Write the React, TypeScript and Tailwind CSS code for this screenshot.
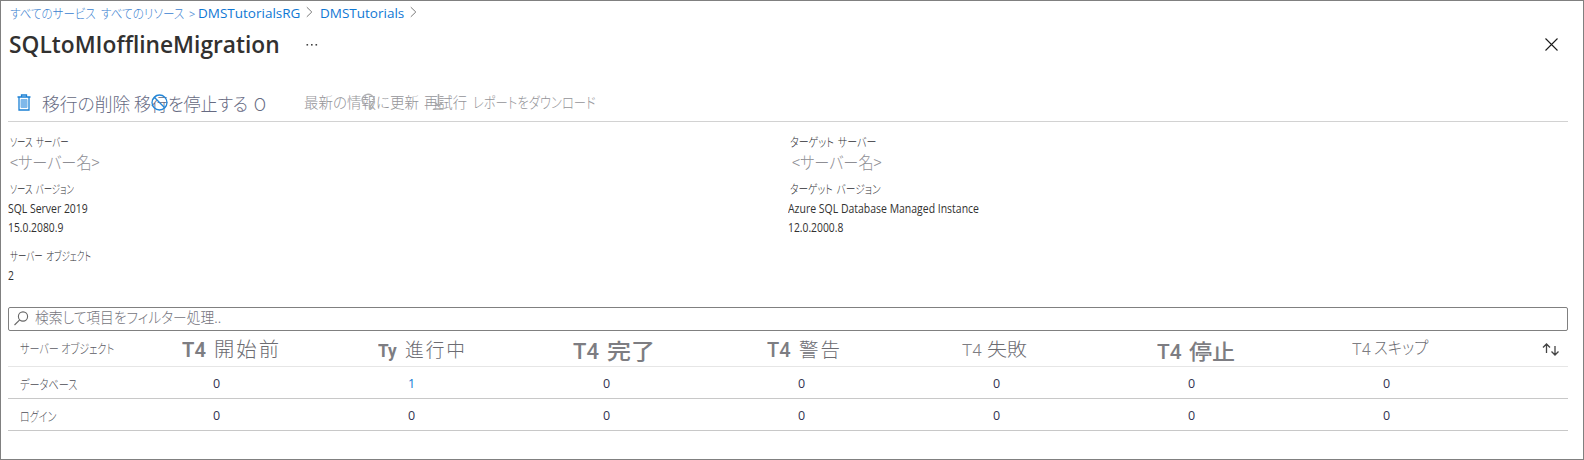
import { useLayoutEffect, useRef, useState } from "react";
import type { ReactNode } from "react";

const JP = "font-['Noto_Sans_CJK_JP',sans-serif] font-light [font-feature-settings:'palt']";
const EN = "font-['Open_Sans','Noto_Sans',sans-serif]";

/* A single line of text condensed or widened to an exact width. */
function Fit({ w, className = "", children }: { w: number; className?: string; children: ReactNode }) {
  const ref = useRef<HTMLSpanElement>(null);
  const [scale, setScale] = useState(1);
  useLayoutEffect(() => {
    const natural = ref.current?.offsetWidth;
    if (natural) setScale(w / natural);
  }, [w, children]);
  return (
    <span className="block shrink-0 whitespace-nowrap" style={{ width: w }}>
      <span ref={ref} className={`inline-block origin-left ${className}`} style={{ transform: `scaleX(${scale})` }}>
        {children}
      </span>
    </span>
  );
}

function Chevron() {
  return (
    <svg width="7" height="12" viewBox="0 0 7 12" fill="none" stroke="#7a7a7a" className="mt-px shrink-0">
      <path d="M.8 1.2 5.8 6 .8 10.8" />
    </svg>
  );
}

type Info = { label: string; labelW: number; lines: [string, number][] };

function Server({ label, labelW, indent }: { label: string; labelW: number; indent: string }) {
  return (
    <div className="h-12">
      <div className="flex h-[19px] items-center pl-0.5">
        <Fit w={labelW} className={`${JP} text-[12px] leading-[18px] text-[#2e2e34] [word-spacing:2px]`}>{label}</Fit>
      </div>
      <div className={`flex h-6 items-center ${indent}`}>
        <Fit w={90} className={`${JP} text-[17px] leading-6 text-[#8e8e94]`}>&lt;サーバー名&gt;</Fit>
      </div>
    </div>
  );
}

function Details({ label, labelW, lines }: Info) {
  return (
    <div>
      <div className="flex h-[18px] items-center pl-0.5">
        <Fit w={labelW} className={`${JP} text-[12px] leading-[18px] text-[#2e2e34] [word-spacing:2px]`}>{label}</Fit>
      </div>
      {lines.map(([text, w]) => (
        <div key={text} className="flex h-[19px] items-center">
          <Fit w={w} className={`${EN} text-[12px] leading-[19px] text-[#323130]`}>{text}</Fit>
        </div>
      ))}
    </div>
  );
}

const thin = `${JP} text-[#6c6c72]`;
const columns = [
  { tag: "T4", tagW: 24, tagC: "font-semibold text-[21px]", gap: "gap-2", name: "開始前", nameW: 67, nameC: `${thin} text-[20px] tracking-[2px]`, pad: "pt-1" },
  { tag: "Ty", tagW: 19, tagC: "font-bold text-[19px]", gap: "gap-2 pl-px", name: "進行中", nameW: 62, nameC: `${thin} text-[19px] tracking-[2px]`, pad: "pt-1" },
  { tag: "T4", tagW: 26, tagC: "font-medium text-[22px]", gap: "gap-2 pl-px", name: "完了", nameW: 48, nameC: "font-['Noto_Sans_CJK_JP',sans-serif] font-medium text-[22px]", pad: "pt-[7px]" },
  { tag: "T4", tagW: 24, tagC: "font-medium text-[20px]", gap: "gap-2", name: "警告", nameW: 43, nameC: `${thin} text-[19px] tracking-[2px]`, pad: "pt-1" },
  { tag: "T4", tagW: 20, tagC: "font-light text-[17px]", gap: "gap-[5px]", name: "失敗", nameW: 40, nameC: `${thin} text-[18px]`, pad: "pt-0.5" },
  { tag: "T4", tagW: 25, tagC: "font-medium text-[20px]", gap: "gap-[7px]", name: "停止", nameW: 46, nameC: "font-['Noto_Sans_CJK_JP',sans-serif] font-medium text-[21px]", pad: "pt-[7px]" },
  { tag: "T4", tagW: 19, tagC: "font-light text-[17px]", gap: "gap-[3px]", name: "スキップ", nameW: 54, nameC: `${thin} text-[17px]`, pad: "" },
];

const rows = [
  { name: "データベース", w: 57, values: [0, 1, 0, 0, 0, 0, 0] },
  { name: "ログイン", w: 36, values: [0, 0, 0, 0, 0, 0, 0] },
];

const GRID = "grid grid-cols-[174px_repeat(6,195px)_1fr]";

export default function App() {
  return (
    <div className="flex h-[460px] w-[1584px] flex-col overflow-hidden border border-[#808080] bg-white pl-[7px] pr-[15px]">
      <nav className="flex h-[21px] items-center pl-0.5">
        <Fit w={86} className={`${JP} text-[13px] leading-5 text-[#3a82d0]`}>すべてのサービス</Fit>
        <span className="w-[5px]" />
        <Fit w={83} className={`${JP} text-[13px] leading-5 text-[#3a82d0]`}>すべてのリソース</Fit>
        <span className="w-[5px]" />
        <Fit w={6} className={`${EN} text-[11px] leading-5 text-[#5a96d8]`}>&gt;</Fit>
        <span className="w-[3px]" />
        <Fit w={102} className={`${EN} text-[13.5px] leading-5 text-[#0f78d4]`}>DMSTutorialsRG</Fit>
        <span className="w-[6px]" />
        <Chevron />
        <span className="w-[7px]" />
        <Fit w={84} className={`${EN} text-[13.5px] leading-5 text-[#0f78d4]`}>DMSTutorials</Fit>
        <span className="w-[6px]" />
        <Chevron />
      </nav>

      <header className="flex h-[45px] items-center pl-px">
        <Fit w={271} className={`${EN} -mt-px text-[23.5px] font-semibold leading-8 text-[#323130]`}>SQLtoMIofflineMigration</Fit>
        <svg width="12" height="4" viewBox="0 0 12 4" fill="#444" className="ml-[26px]">
          <rect x="0.5" y="1" width="1.6" height="1.6" />
          <rect x="5" y="1" width="1.6" height="1.6" />
          <rect x="9.5" y="1" width="1.6" height="1.6" />
        </svg>
        <svg width="13" height="13" viewBox="0 0 13 13" stroke="#1b1b1b" strokeWidth="1.1" className="-mt-px ml-auto mr-[10px]">
          <path d="M.5 .5 12.5 12.5M12.5 .5 .5 12.5" />
        </svg>
      </header>

      <div className="mt-[17px] flex h-[38px] items-center border-b border-[#d2d2d2] pl-[9px]">
        <svg width="14" height="17" viewBox="0 0 14 17" fill="none" stroke="#1b80d4" className="shrink-0">
          <path d="M.5 3h13M4.5 2.8V1h5v1.8M2 3v13h10V3" strokeWidth="1.3" />
          <path d="M4 5.5h6v8H4z" fill="#7fb8ea" stroke="#7fb8ea" />
        </svg>
        <span className="w-[11px]" />
        <Fit w={88} className={`${JP} text-[18px] leading-7 text-[#666a82]`}>移行の削除</Fit>
        <span className="w-1" />
        <div className="relative">
          <Fit w={132} className={`${JP} text-[18px] leading-7 text-[#666a82] [word-spacing:2px]`}>移行を停止する O</Fit>
          <svg width="17" height="17" viewBox="0 0 17 17" fill="none" stroke="#2386d8" strokeWidth="1.3" className="absolute left-[17px] top-[5px]">
            <circle cx="8.5" cy="8.5" r="7.5" />
            <path d="M3.3 3.3 13.7 13.7" />
          </svg>
        </div>
        <span className="w-[38px]" />
        <div className="relative -mt-px">
          <Fit w={115} className={`${JP} text-[15px] leading-6 text-[#949498]`}>最新の情報に更新</Fit>
          <svg width="15" height="17" viewBox="0 0 15 17" fill="none" stroke="#b0b0b2" strokeWidth="1.4" className="absolute left-[57px] top-[3px]">
            <path d="M4 11.5A6 5.5 0 1 1 12 10L8.5 14.5M8.5 15.5v-4M8.5 15.5l3.5-1" />
          </svg>
        </div>
        <span className="w-[5px]" />
        <div className="relative -mt-px">
          <Fit w={43} className={`${JP} text-[15px] leading-6 text-[#949498]`}>再試行</Fit>
          <svg width="11" height="17" viewBox="0 0 11 17" fill="none" stroke="#aaaaac" className="absolute left-[9px] top-[4px]">
            <path d="M5.5 0v12M2 8.500 5.500 12 9 8.500M.5 15h10" strokeWidth="1.6" />
          </svg>
        </div>
        <span className="w-[6px]" />
        <div className="-mt-px">
          <Fit w={123} className={`${JP} text-[15px] leading-6 text-[#949498]`}>レポートをダウンロード</Fit>
        </div>
      </div>

      <section className="grid h-[185px] grid-cols-[780px_1fr] pt-[9px]">
        <div>
          <Server label="ソース サーバー" labelW={59} indent="pl-0.5" />
          <Details label="ソース バージョン" labelW={64} lines={[["SQL Server 2019", 80], ["15.0.2080.9", 55]]} />
          <div className="pt-[11px]">
            <Details label="サーバー オブジェクト" labelW={81} lines={[["2", 6]]} />
          </div>
        </div>
        <div>
          <Server label="ターゲット サーバー" labelW={86} indent="pl-1" />
          <Details label="ターゲット バージョン" labelW={91} lines={[["Azure SQL Database Managed Instance", 191], ["12.0.2000.8", 55]]} />
        </div>
      </section>

      <div className="flex h-6 shrink-0 items-center rounded-[2px] border border-[#808080] pl-[5px]">
        <svg width="15" height="15" viewBox="0 0 15 15" fill="none" stroke="#666" strokeWidth="1.1" className="-mt-0.5">
          <circle cx="9" cy="5.5" r="4.6" />
          <path d="M5.7 8.8.5 14" />
        </svg>
        <span className="w-1.5" />
        <div className="-mt-1">
          <Fit w={186} className={`${JP} text-[15px] leading-5 text-[#74747c]`}>検索して項目をフィルター処理..</Fit>
        </div>
      </div>

      <div>
        <div className={`${GRID} relative h-9 border-b border-[#e6e6e6]`}>
          <div className="flex items-center pb-[3px] pl-3">
            <Fit w={94} className={`${JP} text-[13px] leading-5 text-[#5c5c64]`}>サーバー オブジェクト</Fit>
          </div>
          {columns.map((c) => (
            <div key={c.name} className={`flex items-center text-[#7d7d82] ${c.gap} ${c.pad}`}>
              <Fit w={c.tagW} className={`font-['Roboto',sans-serif] leading-6 ${c.tagC}`}>{c.tag}</Fit>
              <Fit w={c.nameW} className={`-translate-y-px leading-6 ${c.nameC}`}>{c.name}</Fit>
            </div>
          ))}
          <svg width="18" height="13" viewBox="0 0 18 13" fill="none" stroke="#444" strokeWidth="1.3" className="absolute right-2 top-3">
            <path d="M4.5 10V1M1 4.5 4.5 1 8 4.5M13 3v9M9.5 8.500 13 12l3.500-3.500" />
          </svg>
        </div>
        {rows.map((r) => (
          <div key={r.name} className={`${GRID} h-8 items-center border-b border-[#c8c8c8]`}>
            <div className="pl-3">
              <Fit w={r.w} className={`${JP} text-[13px] leading-5 text-[#4c4c54]`}>{r.name}</Fit>
            </div>
            {r.values.map((v, i) => (
              <div key={i} className={`${EN} pl-[31px] pt-0.5 text-[12.5px] leading-5 ${v ? "text-[#0f78d4]" : "text-[#323150]"}`}>{v}</div>
            ))}
          </div>
        ))}
      </div>
    </div>
  );
}
